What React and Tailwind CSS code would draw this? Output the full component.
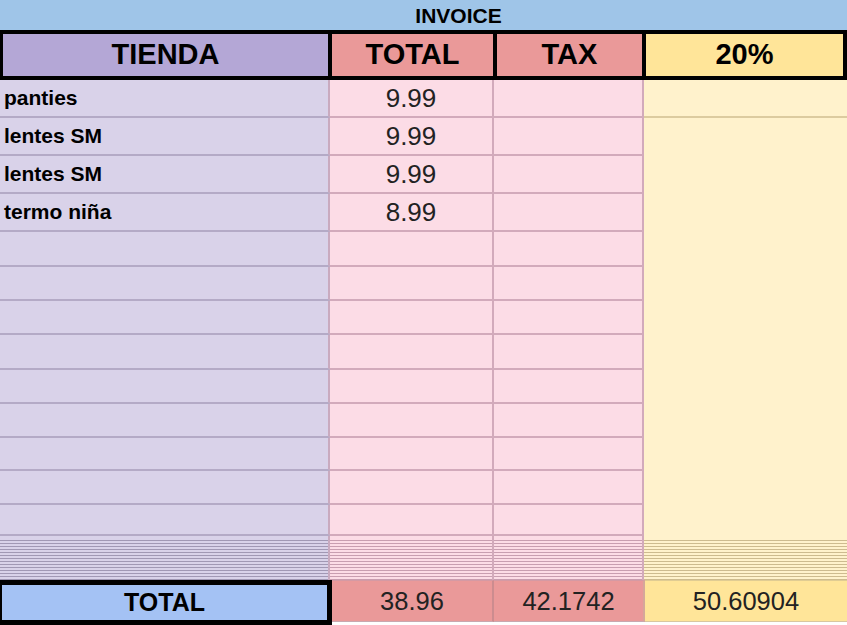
const items = [
  { name: "panties", total: "9.99" },
  { name: "lentes SM", total: "9.99" },
  { name: "lentes SM", total: "9.99" },
  { name: "termo niña", total: "8.99" },
];

// 13 rows in the body, the 4 first hold data
const rowCount = 13;
const hatchLines = Array.from({ length: 14 });

const Hatch = ({ bg, line, edge }) => (
  <div className={`flex flex-col pt-[2px] ${bg} ${edge}`}>
    {hatchLines.map((_, i) => (
      <div key={i} className={`h-[3px] border-b ${line}`} />
    ))}
  </div>
);

export default function App() {
  const rows = Array.from({ length: rowCount }, (_, i) => items[i] || { name: "", total: "" });

  return (
    <div className="w-[847px] h-[625px] overflow-hidden bg-white text-black [font-family:'Liberation_Sans',Arial,sans-serif]">
      {/* title bar */}
      <div className="h-[30px] bg-[#9fc5e8] flex items-center justify-center pl-[70px] text-[21px] font-bold leading-none">
        INVOICE
      </div>

      {/* header */}
      <div className="h-[50px] bg-black flex gap-[4px] pl-[3px] pr-[4px] py-[4px]">
        <div className="w-[325px] bg-[#b4a7d6] flex items-center justify-center text-[29px] font-bold">TIENDA</div>
        <div className="w-[161px] bg-[#ea9999] flex items-center justify-center text-[29px] font-bold">TOTAL</div>
        <div className="w-[145px] bg-[#ea9999] flex items-center justify-center text-[29px] font-bold">TAX</div>
        <div className="w-[197px] bg-[#ffe599] flex items-center justify-center text-[29px] font-bold">20%</div>
      </div>

      {/* body */}
      <div className="grid grid-cols-[330px_164px_150px_203px] grid-rows-[38px_38px_38px_38px_35px_34px_34px_35px_34px_34px_33px_34px_31px]">
        {rows.map((r, i) => (
          <div key={i} className="contents">
            <div className="bg-[#d9d2e9] border-r-2 border-r-[#c9aabf] border-b-2 border-b-[#b4aac6] flex items-center pl-[4px] text-[21px] font-bold">
              {r.name}
            </div>
            <div className="bg-[#fcdce6] border-r-2 border-r-[#d2aabb] border-b-2 border-b-[#d2aabb] flex items-center justify-center text-[26px] text-[#222]">
              {r.total}
            </div>
            <div className="bg-[#fcdce6] border-r-2 border-r-[#d2aabb] border-b-2 border-b-[#d2aabb]" />
            {i === 0 && <div className="bg-[#fff2cc] border-b-2 border-b-[#dccb9f]" />}
            {i === 1 && <div className="row-span-12 bg-[#fff2cc]" />}
          </div>
        ))}
      </div>

      {/* hidden rows */}
      <div className="grid grid-cols-[330px_164px_150px_203px] h-[44px]">
        <Hatch bg="bg-[#d9d2e9]" line="border-b-[#a198b4]" edge="border-r-2 border-r-[#c9aabf]" />
        <Hatch bg="bg-[#fcdce6]" line="border-b-[#c89eb0]" edge="border-r-2 border-r-[#d2aabb]" />
        <Hatch bg="bg-[#fcdce6]" line="border-b-[#c89eb0]" edge="border-r-2 border-r-[#d2aabb]" />
        <Hatch bg="bg-[#fff2cc]" line="border-b-[#cdbb8f]" edge="" />
      </div>

      {/* totals */}
      <div className="grid grid-cols-[332px_162px_151px_202px] h-[45px] items-start">
        <div className="h-[45px] bg-[#a4c2f4] border-black border-t-[5px] border-b-[5px] border-r-[5px] border-l-[2px] flex items-center justify-center text-[25px] font-bold">
          TOTAL
        </div>
        <div className="h-[42px] bg-[#ea9999] border-t border-t-[#d49aa4] border-b border-b-[#c8a8b0] border-r-2 border-r-[#cc8c8f] flex items-center justify-center text-[25.5px] text-[#222]">
          38.96
        </div>
        <div className="h-[42px] bg-[#ea9999] border-t border-t-[#d49aa4] border-b border-b-[#c8a8b0] border-r-2 border-r-[#d6a79a] flex items-center justify-center text-[25.5px] text-[#222]">
          42.1742
        </div>
        <div className="h-[42px] bg-[#ffe599] border-t border-t-[#e0cc93] border-b border-b-[#d8c8a0] flex items-center justify-center text-[25.5px] text-[#222]">
          50.60904
        </div>
      </div>
    </div>
  );
}
